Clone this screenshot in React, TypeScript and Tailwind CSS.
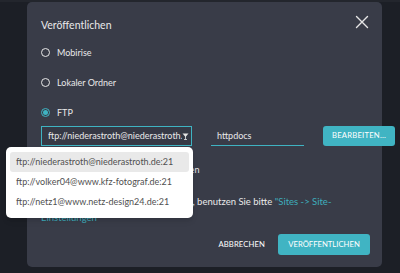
import React from "react";

const font = { fontFamily: "Lato, 'Open Sans', sans-serif" };

function Radio({ checked }: { checked?: boolean }) {
  if (checked) {
    return (
      <span className="flex h-[9px] w-[9px] shrink-0 items-center justify-center rounded-full border-[1.5px] border-[#3fb3c2]">
        <span className="h-[5px] w-[5px] rounded-full bg-[#3fb3c2]" />
      </span>
    );
  }
  return <span className="block h-[9px] w-[9px] shrink-0 rounded-full border-[1.5px] border-[#e8e8e8]" />;
}

export default function App() {
  return (
    <div
      className="relative h-[273px] w-[400px] overflow-hidden bg-[#1c1f26] text-[#e9e9ea]"
      style={font}
    >
      <div className="h-[2px] w-full bg-[#23262d]" />
      <div className="relative ml-[27px] h-[265px] w-[355px] rounded-[5px] bg-[#393c48]">
        <div className="flex items-start justify-between pl-[14px] pr-[13px] pt-[16px]">
          <div className="text-[10.5px] leading-[14px]">Veröffentlichen</div>
          <svg width="14" height="14" viewBox="0 0 14 14" className="mt-[-3px]">
            <path d="M1.5 1.5 L12.5 12.5 M12.5 1.5 L1.5 12.5" stroke="#e6e6e6" strokeWidth="1.4" strokeLinecap="round" />
          </svg>
        </div>
        <div className="mt-[15px] flex flex-col gap-[19px] pl-[14px] text-[9px] leading-[11px]">
          <div className="flex items-center gap-[7px]">
            <Radio />
            <span>Mobirise</span>
          </div>
          <div className="flex items-center gap-[7px]">
            <Radio />
            <span>Lokaler Ordner</span>
          </div>
          <div className="flex items-center gap-[7px]">
            <Radio checked />
            <span>FTP</span>
          </div>
        </div>
        <div className="mt-[8px] flex items-center pl-[14px]">
          <div className="flex h-[20px] w-[151px] shrink-0 items-center overflow-hidden border border-[#3fb3c2] bg-[#363945] pl-[6px] pr-[2px] text-[9px]">
            <span className="flex-1 overflow-hidden whitespace-nowrap">ftp://niederastroth@niederastroth.de:21</span>
            <svg width="7" height="8" viewBox="0 0 7 8" className="shrink-0">
              <path d="M0.5 1.5 L6.5 1.5 L3.5 5 Z" fill="#e6e6e6" />
              <path d="M3.5 2 L3.5 7.5 M2 7.5 L5 7.5" stroke="#e6e6e6" strokeWidth="0.8" />
            </svg>
          </div>
          <div className="ml-[19px] flex h-[20px] w-[93px] shrink-0 items-center border-b border-[#3fb3c2] pl-[6px] text-[9px]">
            httpdocs
          </div>
          <button className="ml-[19px] flex h-[20px] w-[72px] shrink-0 items-center justify-center rounded-[3px] bg-[#40b4c3] text-[7.7px] tracking-[0.2px] text-white">
            BEARBEITEN...
          </button>
        </div>
        <div className="mt-[18px] flex items-center gap-[7px] pl-[14px] text-[9px] leading-[12px]">
          <span className="block h-[9px] w-[9px] shrink-0 rounded-[1px] border-[1.5px] border-[#e8e8e8]" />
          <span className="tracking-[0.3px]">Nur geänderte Dateien hochladen</span>
        </div>
        <div className="mt-[18px] pl-[14px] pr-[4px] text-[9.5px] leading-[16px]">
          Um die FTP-Einstellungen zu ändern, benutzen Sie bitte{" "}
          <span className="text-[#3eaebd]">
            "Sites -&gt; Site-
            <br />
            Einstellungen"
          </span>
        </div>
        <div className="mt-[8px] flex items-center justify-end pr-[12px]">
          <button className="mr-[13px] text-[7.7px] tracking-[0.1px] text-white">ABBRECHEN</button>
          <button className="flex h-[21px] w-[92px] items-center justify-center rounded-[3px] bg-[#40b4c3] text-[7.7px] text-white">
            VERÖFFENTLICHEN
          </button>
        </div>

        <div className="absolute left-[-21px] top-[145px] w-[187px] rounded-[5px] bg-white px-[4px] pb-[6px] pt-[5px] text-[9px] text-[#505050] shadow-md">
          <div className="flex h-[20px] items-center whitespace-nowrap rounded-[3px] bg-[#e9e9e9] pl-[6px]">ftp://niederastroth@niederastroth.de:21</div>
          <div className="flex h-[20px] items-center whitespace-nowrap pl-[6px]">ftp://volker04@www.kfz-fotograf.de:21</div>
          <div className="flex h-[20px] items-center whitespace-nowrap pl-[6px]">ftp://netz1@www.netz-design24.de:21</div>
        </div>
      </div>
      <div className="ml-[40px] mt-[1px] whitespace-nowrap text-[40px] font-bold leading-[40px] tracking-[18px] text-[#c9cbd0]">
        lofo fol
      </div>
    </div>
  );
}
